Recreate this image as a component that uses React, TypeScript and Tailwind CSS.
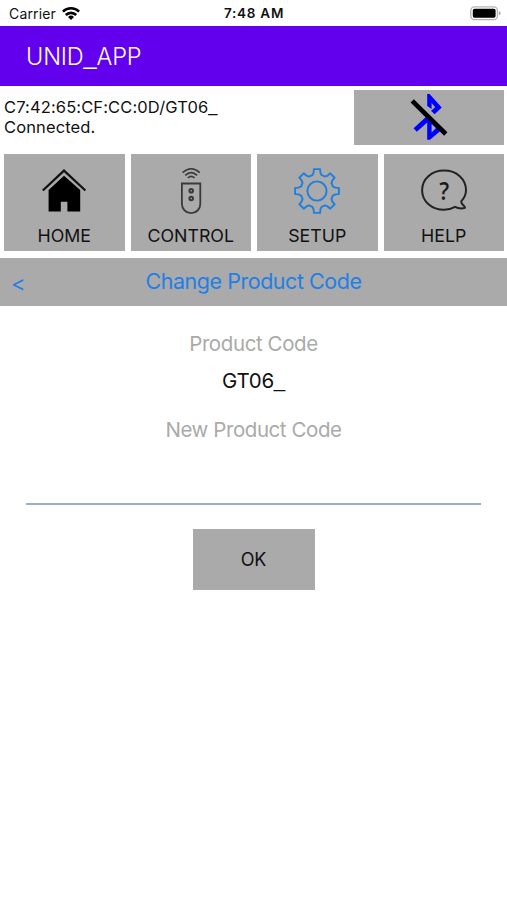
import type { ReactNode } from 'react';

interface NavItem {
  label: string;
  icon: ReactNode;
}

function WifiIcon() {
  return (
    <svg className="w-[18px] h-[14px]" viewBox="0 0 18 14" fill="none" stroke="black" strokeWidth="2.6">
      <path d="M0.9 4.6 A11.6 11.6 0 0 1 17.1 4.6" />
      <path d="M3.8 8 A7.4 7.4 0 0 1 14.2 8" />
      <path d="M9 13 L6 10 A4.3 4.3 0 0 1 12 10 Z" fill="black" stroke="none" />
    </svg>
  );
}

function BatteryIcon() {
  return (
    <svg className="w-[31px] h-[15px]" viewBox="0 0 31 15">
      <rect x="0.8" y="0.9" width="26.6" height="12.8" rx="3.6" fill="white" stroke="#b4b4b4" strokeWidth="1.3" />
      <rect x="2.8" y="2.8" width="22.8" height="9" rx="1.8" fill="black" />
      <path d="M28.8 5 Q30.6 5.8 30.6 7.3 Q30.6 8.8 28.8 9.6 Z" fill="#a8a8a8" />
    </svg>
  );
}

function BluetoothOffIcon() {
  return (
    <svg className="w-12 h-12" viewBox="0 0 48 48" fill="none">
      <path d="M22.2 1 H24.6 L36.7 14.6 L29.6 21.2 L26 17.8 L30.2 14.2 L26.6 10 V16 L22.2 13 Z" fill="#0000ff" />
      <path
        d="M22.2 46.8 V29.4 L11.8 38.8 L8.6 35.2 L22 23 L36.6 37 L25 46.8 Z M26.6 31 V39.4 L31 35 Z"
        fill="#0000ff"
        fillRule="evenodd"
      />
      <path d="M7.2 7.8 L40.8 41" stroke="black" strokeWidth="4.6" />
    </svg>
  );
}

function HomeIcon() {
  return (
    <svg className="w-12 h-12" viewBox="0 0 48 48">
      <path d="M2.8 23.5 L24 3.6 L45.4 23.5" fill="none" stroke="#111" strokeWidth="2.2" />
      <path d="M8.6 23 L24 8.8 L40.2 23 V44.4 H27.4 V34.8 H20.8 V44.4 H8.6 Z" fill="black" />
    </svg>
  );
}

function RemoteIcon() {
  return (
    <svg className="w-12 h-12" viewBox="0 0 48 48" fill="none" stroke="#3a3a3a" strokeWidth="1.5">
      <path d="M14.9 16.5 H33.3 V37 A9.2 9.2 0 0 1 14.9 37 Z" strokeWidth="1.8" />
      <circle cx="24.2" cy="23.7" r="1.8" strokeWidth="2" />
      <circle cx="24.2" cy="31.5" r="1.8" strokeWidth="2" />
      <path d="M15.6 5.6 Q24.2 -2.2 32.8 5.6" />
      <path d="M18.2 8.4 Q24.2 2.8 30.2 8.4" />
      <path d="M20.8 11 Q24.2 7.8 27.6 11" />
    </svg>
  );
}

// One tooth spans 45 degrees: flank, rounded tip, flank, then the arc to the next one
function gearPath() {
  const tooth = [
    [-4.6, -15.8],
    [-3.4, -18.4],
    [-3.1, -21.9],
    [3.1, -21.9],
    [3.4, -18.4],
    [4.6, -15.8],
  ];
  let d = '';
  for (let i = 0; i < 8; i++) {
    const a = (i * Math.PI) / 4;
    tooth.forEach(([x, y], j) => {
      const px = (24 + x * Math.cos(a) - y * Math.sin(a)).toFixed(2);
      const py = (24 + x * Math.sin(a) + y * Math.cos(a)).toFixed(2);
      if (i === 0 && j === 0) d += `M${px} ${py}`;
      else if (j === 0) d += `A16.5 16.5 0 0 1 ${px} ${py}`;
      else d += `L${px} ${py}`;
    });
  }
  return d + 'Z';
}

function GearIcon() {
  return (
    <svg className="w-12 h-12" viewBox="0 0 48 48" fill="none" stroke="#1f7fe0" strokeWidth="1.9" strokeLinejoin="round">
      <path d={gearPath()} />
      <circle cx="24" cy="24" r="9.6" />
    </svg>
  );
}

function HelpIcon() {
  return (
    <svg className="w-12 h-12" viewBox="0 0 48 48" fill="none">
      <path
        d="M41.2 34.4 C44.4 31 46 27.4 46 23.3 C46 11.9 36.6 3.6 24.2 3.6 C11.4 3.6 2.1 12 2.1 23.3 C2.1 34.6 11.8 42.8 24.2 42.8 C28.2 42.8 31.8 41.6 35 39.8 C38 41.4 41.6 41.8 45 40.8 C45 38.4 41 38 41.2 34.4 Z"
        stroke="#222"
        strokeWidth="2"
        strokeLinejoin="round"
      />
      <text
        transform="translate(24.2 32.6) scale(0.84 1)"
        textAnchor="middle"
        fill="#1a1a1a"
        className="font-['Open_Sans',sans-serif] text-[26px] font-semibold"
      >
        ?
      </text>
    </svg>
  );
}

function Underscore() {
  return <span className="relative -top-px font-['Liberation_Sans',sans-serif] leading-none">_</span>;
}

const navItems: NavItem[] = [
  { label: 'HOME', icon: <HomeIcon /> },
  { label: 'CONTROL', icon: <RemoteIcon /> },
  { label: 'SETUP', icon: <GearIcon /> },
  { label: 'HELP', icon: <HelpIcon /> },
];

export default function App() {
  return (
    <div className="w-full h-[900px] overflow-hidden bg-white text-[#111] font-[Inter,'Liberation_Sans',sans-serif] flex flex-col">
      {/* Status bar */}
      <div className="grid grid-cols-3 items-center h-[25.5px] shrink-0 pl-[9px] pr-[6px] pt-[2px]">
        <div className="flex items-center gap-[6px] text-[14px] leading-none">
          <span className="tracking-[0.15px]">Carrier</span>
          <WifiIcon />
        </div>
        <span className="text-center text-[13.5px] leading-none font-semibold tracking-[0.75px] -ml-[2px]">7:48 AM</span>
        <div className="flex justify-end">
          <BatteryIcon />
        </div>
      </div>

      <header className="flex items-center h-[60.5px] shrink-0 bg-[#6200ee] px-[26px] pt-[2px]">
        <h1 className="text-[23.5px] leading-none font-light tracking-[-0.15px] text-white">
          UNID<Underscore />APP
        </h1>
      </header>

      <div className="flex justify-between pt-[4px] pl-[4px] pr-[3px]">
        <p className="pt-[7px] text-[16.5px] leading-[20px] tracking-[0.12px]">
          C7:42:65:CF:CC:0D/GT06<Underscore />
          <br />
          Connected.
        </p>
        <button className="flex items-center justify-center w-[150px] h-[54.5px] bg-[#aaaaaa]">
          <BluetoothOffIcon />
        </button>
      </div>

      <nav className="grid grid-cols-4 gap-[6px] pt-[9px] pl-[4px] pr-[3px]">
        {navItems.map((item) => (
          <button key={item.label} className="flex flex-col items-center h-[97.5px] pt-[13px] bg-[#aaaaaa]">
            {item.icon}
            <span className="mt-[9.5px] text-[17.8px] leading-6">{item.label}</span>
          </button>
        ))}
      </nav>

      <div className="grid grid-cols-[60px_1fr_60px] items-center h-[48.5px] shrink-0 mt-[6.5px] bg-[#aaaaaa] text-[#1f7fe6] text-[22px]">
        <button className="pl-[11px] pt-[2px] text-left leading-none">&lt;</button>
        <h2 className="text-center text-[21.5px] leading-none tracking-[-0.47px]">Change Product Code</h2>
      </div>

      <main className="flex flex-col items-center px-[26px] text-center">
        <label className="mt-[25.5px] text-[20.5px] leading-6 tracking-[-0.4px] text-[#aaaaaa]">Product Code</label>
        <p className="mt-[13px] text-[20.5px] leading-6 tracking-[-0.25px]">
          GT06<Underscore />
        </p>
        <label className="mt-[25px] text-[20.5px] leading-6 tracking-[-0.43px] text-[#aaaaaa]">New Product Code</label>
        <div className="w-full h-[63px] border-b-2 border-[#9aaecb]"></div>
        <button className="mt-[24px] w-[122px] h-[61px] pt-px bg-[#aaaaaa] text-[18px] tracking-[-0.2px]">OK</button>
      </main>
    </div>
  );
}
